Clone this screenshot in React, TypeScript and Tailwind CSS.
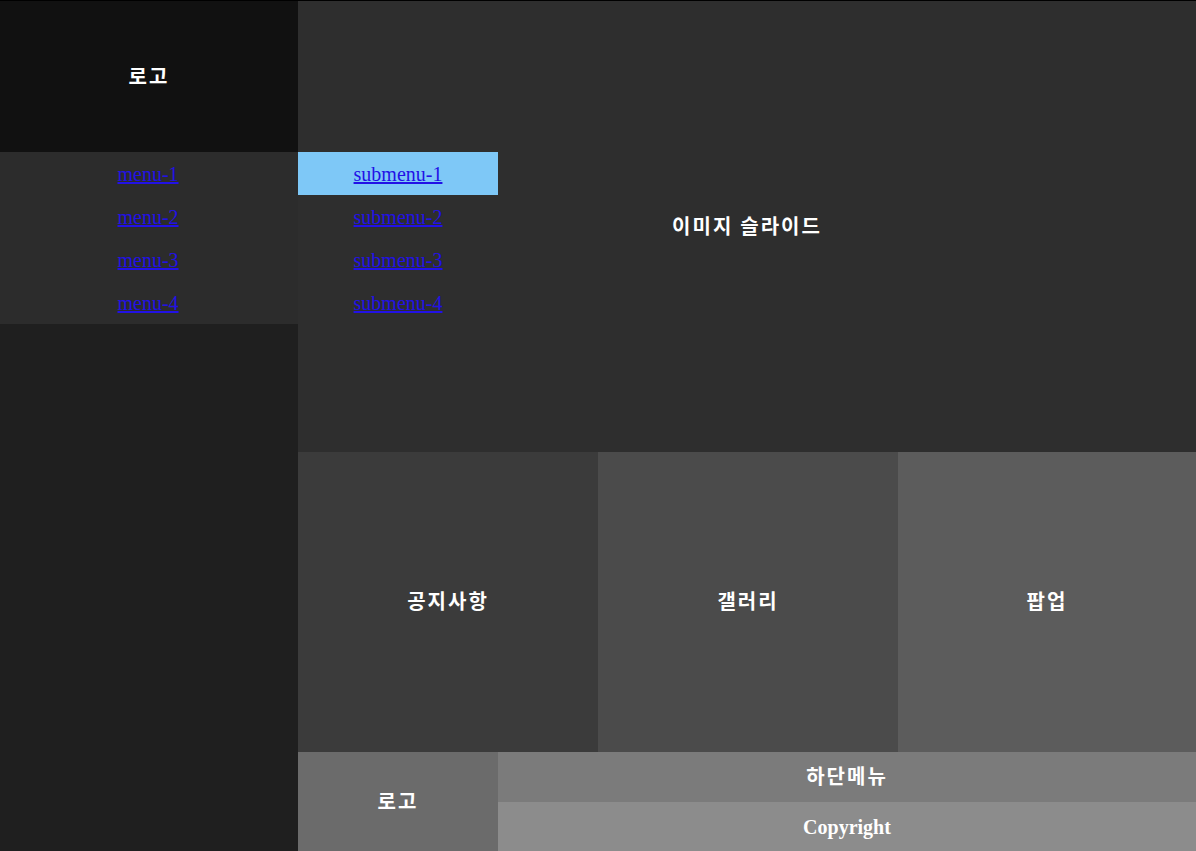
import { FC } from "react";

const menus = ["menu-1", "menu-2", "menu-3", "menu-4"];
const subMenus = ["submenu-1", "submenu-2", "submenu-3", "submenu-4"];

const App: FC = () => {
  return (
    <div
      className="w-[1196px] h-[851px] overflow-hidden border-t border-black flex text-[20px]"
      style={{ fontFamily: '"Liberation Serif", "Noto Sans CJK KR", serif' }}
    >
      {/* 왼쪽 사이드 */}
      <div className="w-[298px] flex flex-col bg-[#1f1f1f]">
        <div className="h-[151px] flex items-center justify-center bg-[#111111] text-white font-bold tracking-[2px]">
          로고
        </div>
        <ul className="bg-[#2c2c2c]">
          {menus.map((m) => (
            <li key={m} className="h-[43px] flex items-center justify-center pr-[2px]">
              <a href="#" className="text-[#2211e6] underline">
                {m}
              </a>
            </li>
          ))}
        </ul>
      </div>

      {/* 오른쪽 본문 */}
      <div className="flex-1 flex flex-col">
        <div className="relative h-[451px] flex items-center justify-center bg-[#2e2e2e] text-white font-bold">
          <span className="tracking-[2px]">이미지 슬라이드</span>
          <ul className="absolute left-0 top-[151px] w-[200px]">
            {subMenus.map((s, i) => (
              <li
                key={s}
                className={
                  i === 0
                    ? "h-[43px] flex items-center justify-center bg-[#7ec8f7]"
                    : "h-[43px] flex items-center justify-center"
                }
              >
                <a href="#" className="text-[#2211e6] underline font-normal">
                  {s}
                </a>
              </li>
            ))}
          </ul>
        </div>
        <div className="h-[300px] flex text-white font-bold tracking-[2px]">
          <div className="w-[300px] flex items-center justify-center bg-[#3b3b3b]">공지사항</div>
          <div className="w-[300px] flex items-center justify-center bg-[#4b4b4b]">갤러리</div>
          <div className="flex-1 flex items-center justify-center bg-[#5c5c5c]">팝업</div>
        </div>
        <div className="flex-1 flex text-white font-bold">
          <div className="w-[200px] flex items-center justify-center bg-[#6b6b6b] tracking-[2px]">로고</div>
          <div className="flex-1 flex flex-col">
            <div className="h-[50px] flex items-center justify-center bg-[#7b7b7b] tracking-[2px]">하단메뉴</div>
            <div className="flex-1 flex items-center justify-center bg-[#8c8c8c]">Copyright</div>
          </div>
        </div>
      </div>
    </div>
  );
};

export default App;
